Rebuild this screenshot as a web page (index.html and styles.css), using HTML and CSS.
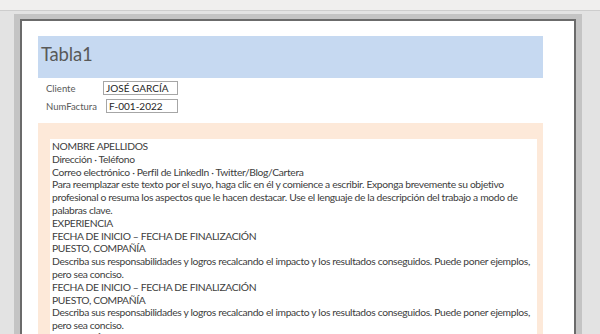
FILE: index.html
```html
<!DOCTYPE html>
<html lang="es">
<head>
    <meta charset="UTF-8">
    <meta name="viewport" content="width=device-width, initial-scale=1.0">
    <title>Tabla1</title>
    <link rel="stylesheet" href="styles.css">
</head>
<body>
    <div class="topbar"></div>
    <div class="stage">
        <div class="shadow">
            <div class="sheet">
                <header class="title-band">
                    <h1>Tabla1</h1>
                </header>
                <div class="fields">
                    <div class="field">
                        <span class="label">Cliente</span>
                        <span class="value">JOSÉ GARCÍA</span>
                    </div>
                    <div class="field">
                        <span class="label">NumFactura</span>
                        <span class="value value-shift">F-001-2022</span>
                    </div>
                </div>
                <section class="detail">
                    <!-- memo lines keep the report's own line breaks -->
                    <div class="memo">
                        <p>NOMBRE APELLIDOS</p>
                        <p>Dirección · Teléfono</p>
                        <p>Correo electrónico · Perfil de LinkedIn · Twitter/Blog/Cartera</p>
                        <p>Para reemplazar este texto por el suyo, haga clic en él y comience a escribir. Exponga brevemente su objetivo<br>profesional o resuma los aspectos que le hacen destacar. Use el lenguaje de la descripción del trabajo a modo de<br>palabras clave.</p>
                        <p>EXPERIENCIA</p>
                        <p>FECHA DE INICIO – FECHA DE FINALIZACIÓN</p>
                        <p>PUESTO, COMPAÑÍA</p>
                        <p>Describa sus responsabilidades y logros recalcando el impacto y los resultados conseguidos. Puede poner ejemplos,<br>pero sea conciso.</p>
                        <p>FECHA DE INICIO – FECHA DE FINALIZACIÓN</p>
                        <p>PUESTO, COMPAÑÍA</p>
                        <p>Describa sus responsabilidades y logros recalcando el impacto y los resultados conseguidos. Puede poner ejemplos,<br>pero sea conciso.</p>
                        <p>EDUCACIÓN</p>
                    </div>
                </section>
            </div>
        </div>
    </div>
</body>
</html>
```

FILE: styles.css
```css
html, body {
    margin: 0;
    height: 100%;
    overflow: hidden;
}
body {
    background: #e3e3e3;
    font-family: Lato, "Open Sans", sans-serif;
    color: #404040;
}
.topbar {
    height: 10px;
    background: #f0efee;
    border-bottom: 1px solid #cdcdcd;
}
.stage {
    padding: 3px 18px 0 14px;
}
.shadow {
    background: #c4c4c4;
    padding: 5px 6px 0 6px;
    height: 400px;
}
.sheet {
    background: #fff;
    border: 2px solid #6b6b6b;
    border-bottom: none;
    height: 100%;
    padding: 15px 31px 0 16px;
}
.title-band {
    background: #c6d9f1;
    height: 42px;
    padding-left: 3px;
}
.title-band h1 {
    margin: 0;
    font-weight: normal;
    font-size: 18.5px;
    line-height: 36px;
    letter-spacing: -0.2px;
    color: #595959;
}
.fields {
    padding: 3px 0 0 8px;
    height: 42px;
}
.field {
    display: flex;
    align-items: center;
    height: 14px;
    margin-bottom: 4px;
}
.label {
    width: 57px;
    font-size: 9.5px;
    color: #595959;
}
.value {
    width: 71px;
    height: 12px;
    border: 1px solid #a6a6a6;
    padding-left: 2px;
    font-size: 10px;
    line-height: 12px;
    color: #262626;
}
.value-shift {
    margin-left: 3px;
    width: 68px;
}
.detail {
    background: #fde9d9;
    padding: 16px 6px 0 12px;
    height: 300px;
}
.memo {
    background: #fff;
    height: 100%;
    padding: 1px 0 0 2px;
    font-size: 10.3px;
    line-height: 12.8px;
    letter-spacing: -0.34px;
    white-space: nowrap;
    overflow: hidden;
}
.memo p {
    margin: 0;
}
```
